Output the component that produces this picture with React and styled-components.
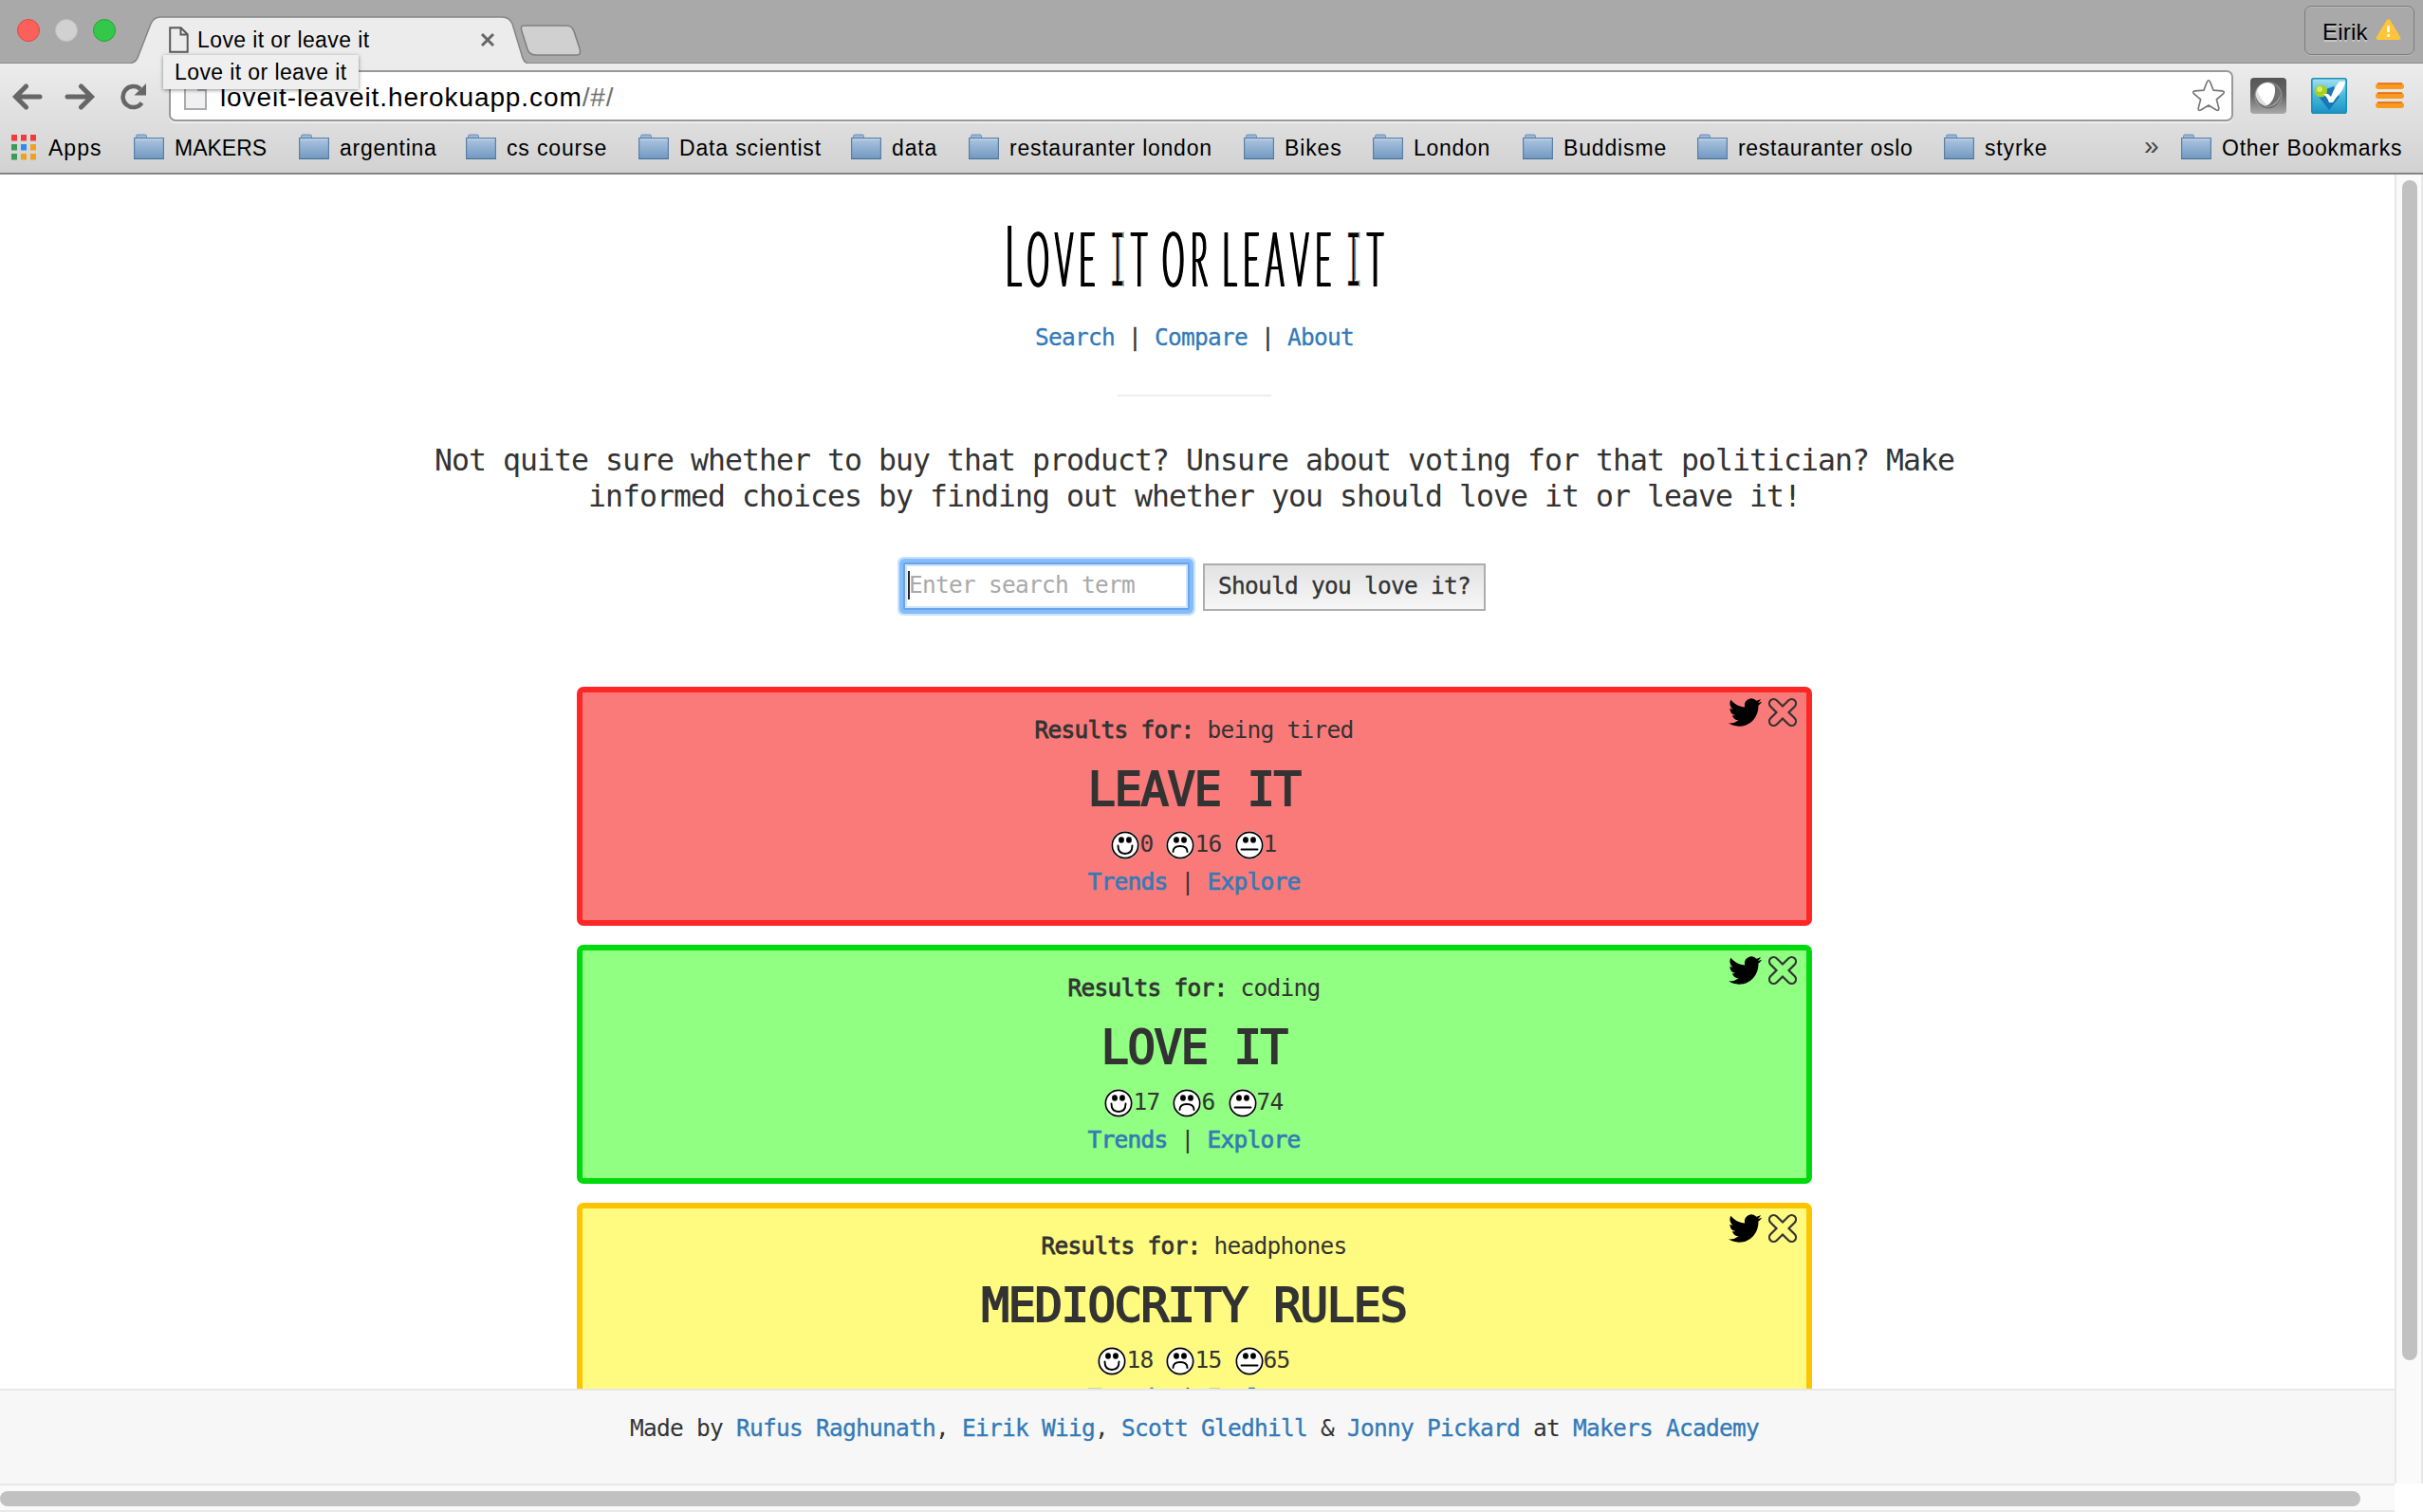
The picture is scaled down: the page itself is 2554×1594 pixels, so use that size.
import React from 'react';
import styled, { createGlobalStyle } from 'styled-components';

const Global = createGlobalStyle`
  * { box-sizing: border-box; }
  body { margin: 0; overflow: hidden; background: #fff; }
`;

const Window = styled.div`
  width: 2554px; height: 1594px; display: flex; flex-direction: column; overflow: hidden;
  font-family: "Liberation Sans", sans-serif; color: #000;
`;
const TitleBar = styled.div`
  height: 66px; flex: none; display: flex; align-items: flex-end; padding: 0 9px 0 18px; background: #a9a9a9;
`;
const Lights = styled.div`display: flex; gap: 16px; align-self: flex-start; margin-top: 20px; width: 120px;`;
const Light = styled.i`
  width: 24px; height: 24px; border-radius: 50%; background: ${p => p.$fill}; border: 1px solid ${p => p.$edge};
`;
const Tab = styled.div`
  position: relative; width: 418px; height: 49px; display: flex; align-items: center; padding: 0 34px 0 40px; z-index: 2;
`;
const TabShape = styled.svg`position: absolute; left: 0; top: 0;`;
const TabTitle = styled.span`
  position: relative; flex: 1; margin-left: 9px; padding-top: 2px; font-size: 23px; letter-spacing: .4px; white-space: nowrap;
`;
const OverSvg = styled.svg`position: relative; flex: none;`;
const Tooltip = styled.div`
  position: absolute; left: 34px; top: 41px; width: 206px; height: 36px; background: #efefef;
  box-shadow: 0 1px 4px rgba(0,0,0,.45); font-size: 23px; line-height: 37px; letter-spacing: .4px;
  padding-left: 12px; white-space: nowrap; z-index: 5;
`;
const NewTab = styled.svg`align-self: flex-start; margin: 26px 0 0 -9px;`;
const User = styled.div`
  align-self: flex-start; margin: 6px 0 0 auto; width: 116px; height: 52px; border: 1.5px solid #7b7b7b; border-radius: 7px;
  display: flex; align-items: center; gap: 8px; padding: 3px 0 0 18px; font-size: 24px; letter-spacing: .2px;
  text-shadow: 0 2px 0 rgba(255,255,255,.4); box-shadow: inset 0 1px 0 #b8b8b8, 0 1px 0 #b8b8b8;
  svg { margin-top: -5px; }
`;
const ToolArea = styled.div`
  height: 118px; flex: none; border-top: 1px solid #8d8d8d; border-bottom: 2px solid #848484;
  background: linear-gradient(#ececec, #d2d2d2); display: flex; flex-direction: column;
`;
const Toolbar = styled.div`height: 62px; display: flex; align-items: center; padding: 7px 18px 0 12px;`;
const NavIcons = styled.div`
  display: flex; gap: 23px; width: 166px; align-items: center; padding-top: 2px;
  svg:last-child { margin-left: 3px; }
`;
const Omnibox = styled.div`
  width: 2176px; height: 54px; border: 2px solid #999; border-radius: 7px; background: #fff;
  display: flex; align-items: center; padding: 0 6px 0 14px; box-shadow: 0 2px 0 rgba(255,255,255,.5);
`;
const Url = styled.span`
  flex: 1; margin-left: 14px; padding-top: 3px; font-size: 28px; letter-spacing: .9px; color: #000; white-space: nowrap;
  em { font-style: normal; color: #707070; }
`;
const Extensions = styled.div`
  display: flex; align-items: center; margin-left: 18px; gap: 26px;
  svg:last-child { margin-left: 4px; }
`;
const Bookmarks = styled.div`height: 54px; display: flex; align-items: center; padding-left: 12px;`;
const Bookmark = styled.div`
  width: ${p => p.$w}px; display: flex; align-items: center; gap: 11px; flex: none;
  font-size: 23px; letter-spacing: ${p => p.$ls ?? 0.85}px; white-space: nowrap;
  span { padding-top: 2px; }
`;
const More = styled.span`width: 39px; font-size: 28px; line-height: 28px; color: #444; margin-left: auto; padding-bottom: 3px;`;

const Body = styled.div`flex: 1; min-height: 0; display: grid; grid-template: 1380px 30px / 2524px 30px;`;
const Page = styled.div`
  min-height: 0; overflow: hidden; display: flex; flex-direction: column; color: #333;
  font-family: "DejaVu Sans Mono", monospace; font-size: 24.5px; letter-spacing: -.0306em; line-height: 40px;
`;
const Content = styled.main`
  width: 2518px; height: 1280px; flex: none; overflow: hidden; display: flex; flex-direction: column; align-items: center;
`;
const Title = styled.h1`
  margin: 37px 0 1px; height: 92px; width: 1106px; display: flex; align-items: baseline; justify-content: space-between;
  transform: scaleX(.36); font: 300 81px/92px Lato, sans-serif; color: #000; text-transform: uppercase; flex: none;
  letter-spacing: 0; text-shadow: -1.5px 0 #000, 1.5px 0 #000, -3px 0 #000, 3px 0 #000;
`;
const Word = styled.span`display: flex; align-items: baseline; justify-content: space-between; width: ${p => p.$w}px;`;
const Big = styled.span`font-size: 91px;`;
const Serifed = styled.span`
  font-family: "DejaVu Sans Mono", monospace; font-weight: 400; font-size: 79px; margin: 0 -3px; text-shadow: 2px 0 #000;
  -webkit-text-stroke: 1.5px #fff;
`;
const Link = styled.a`color: #337ab7; -webkit-text-stroke: ${p => (p.$strong ? '.7px' : '.3px')} #337ab7;`;
const Nav = styled.nav`margin-top: 22px; white-space: pre; height: 40px; flex: none; -webkit-text-stroke: .3px;`;
const Rule = styled.div`width: 162px; height: 2px; background: #eee; margin-top: 40px; flex: none;`;
const Lead = styled.p`
  margin: 48px 0 0; width: 1680px; font-size: 31.5px; letter-spacing: -.0306em; line-height: 38px; text-align: center;
  height: 77px; flex: none;
`;
const Search = styled.form`display: flex; gap: 14px; margin-top: 50px; height: 52px; flex: none; align-items: center;`;
const Field = styled.div`
  width: 302px; height: 50px; background: #fff; border: 2px solid #6ba5e7; padding: 0 0 2px 3px; color: #a9a9a9;
  box-shadow: 0 0 0 4px #85bdfc, 0 0 0 6px #c9e2fd, inset 0 0 0 2px #cfe5fd; border-radius: 2px;
  display: flex; align-items: center; white-space: pre; margin-top: -2px;
`;
const Caret = styled.i`width: 2px; height: 30px; background: #222; margin-right: -1px;`;
const Button = styled.button`
  width: 298px; height: 50px; padding: 0 0 2px; border: 2px solid #adadad; background: linear-gradient(#e2e2e2, #f7f7f7);
  font: inherit; letter-spacing: inherit; color: #333; white-space: nowrap; -webkit-text-stroke: .3px;
`;
const Cards = styled.section`margin-top: 79px; display: flex; flex-direction: column; gap: 20px;`;
const Card = styled.article`
  position: relative; width: 1302px; height: 252px; flex: none; border: 6px solid ${p => p.$edge}; background: ${p => p.$fill};
  border-radius: 7px; display: flex; flex-direction: column; align-items: center; padding: 20px 1px 0 0;
`;
const Actions = styled.div`position: absolute; right: 9px; top: 5px; display: flex; align-items: center; gap: 6px;`;
const Line = styled.div`height: 40px; flex: none; white-space: pre; b { font-weight: 400; -webkit-text-stroke: .8px; }`;
const Verdict = styled.h2`
  margin: 17px 0 11px; font-size: 49px; line-height: 52px; height: 52px; flex: none; font-weight: 400; letter-spacing: -.0306em;
  -webkit-text-stroke: 1.8px #333; white-space: pre;
`;
const Scores = styled.div`height: 40px; flex: none; display: flex; gap: 14px;`;
const Score = styled.span`display: flex; align-items: center; svg { margin-top: 2px; }`;
const Footer = styled.footer`
  height: 100px; flex: none; background: #f7f7f7; border-top: 2px solid #e7e7e7; text-align: center; padding: 20px 6px 0 0;
  white-space: pre;
`;
const VTrack = styled.div`background: #fafafa; border: solid #e8e8e8; border-width: 0 2px; padding: 6px 0 0 6px;`;
const VThumb = styled.div`width: 16px; height: 1244px; border-radius: 8px; background: #c1c1c1;`;
const HTrack = styled.div`background: #fafafa; border: solid #e8e8e8; border-width: 2px 0; padding: 6px 0 0 0;`;
const HThumb = styled.div`height: 16px; width: 2488px; border-radius: 8px; background: #c1c1c1;`;

const Folder = () => (
  <svg width="32" height="28" viewBox="0 0 32 28">
    <defs><linearGradient id="fold" x1="0" y1="0" x2="0" y2="1"><stop offset="0" stopColor="#adc5de" /><stop offset="1" stopColor="#7199c3" /></linearGradient></defs>
    <path d="M2.5 5V2.5q0-1.500 1.500-1.500h8q1.500 0 1.500 1.500V5" fill="#9bb7d5" stroke="#6d8fb3" />
    <rect x=".6" y="4.600" width="30.800" height="21.800" fill="url(#fold)" stroke="#5a7fa6" strokeWidth="1.200" />
    <path d="M1.500 6h29" stroke="#c6d9eb" /><path d="M0 26.500h32" stroke="#4f7093" />
  </svg>
);
const Doc = () => (
  <OverSvg width="21" height="28" viewBox="0 0 21 28"><path d="M1.200 1.200h11.500l7 7V26.800H1.200zM12.500 1.500v7h7" fill="none" stroke="#5a5a5a" strokeWidth="2" /></OverSvg>
);
const Arrow = ({ flip }) => (
  <svg width="33" height="28" viewBox="0 0 33 28"><path d={flip ? 'M3 14h25M17.500 3 28.500 14 17.500 25' : 'M30 14H5M15.500 3 4.500 14l11 11'} fill="none" stroke="#666" strokeWidth="5" strokeLinecap="round" /></svg>
);
const Reload = () => (
  <svg width="29" height="28" viewBox="0 0 29 28"><path d="M22.500 20.500A11 11 0 1 1 21 6" fill="none" stroke="#666" strokeWidth="4.500" /><path d="M27 0v12.500H14.500z" fill="#666" /></svg>
);
const Star = () => (
  <svg width="36" height="36" viewBox="0 0 36 36"><path d="M16.300 3.500q1.700-3.500 3.400 0l3.400 8.700 9.300.7q3.200.7 1 3l-7 6 2.400 9.200q.2 3-2.600 1.900L18 28l-8.200 5q-2.800 1.100-2.600-1.900l2.400-9.200-7-6q-2.200-2.300 1-3l9.300-.7z" fill="#fff" stroke="#777" strokeWidth="1.700" /></svg>
);
const GreyExtension = () => (
  <svg width="38" height="38" viewBox="0 0 38 38">
    <defs><linearGradient id="gext" x1="0" y1="0" x2="0" y2="1"><stop offset="0" stopColor="#565656" /><stop offset=".5" stopColor="#666" /><stop offset="1" stopColor="#aaa" /></linearGradient></defs>
    <rect width="38" height="38" rx="4" fill="url(#gext)" /><circle cx="19" cy="19" r="14.500" fill="#999" />
    <circle cx="19" cy="19" r="13.500" fill="#707070" />
    <path d="M5.500 18Q7 6 18 5q9 1 8 9-1 11-10 16Q7 27 5.500 18z" fill="#dedede" /><path d="M7 14Q10 6 18 5q9 1 8 9-1 11-8 15Q12 24 7 14z" fill="#fff" />
    <path d="M15 31q14-2 17-15-1 15-17 15z" fill="#a5a5a5" />
  </svg>
);
const CheckExtension = () => (
  <svg width="38" height="38" viewBox="0 0 38 38">
    <defs><linearGradient id="cext" x1="0" y1="0" x2="0" y2="1"><stop offset="0" stopColor="#a5e0f2" /><stop offset=".5" stopColor="#49b7dc" /><stop offset="1" stopColor="#1b93c6" /></linearGradient></defs>
    <rect x=".8" y=".8" width="36.400" height="36.400" rx="2" fill="url(#cext)" stroke="#1a8fb4" strokeWidth="1.600" />
    <path d="M8 20l11 14 11-14-6-11-8 3z" fill="#1976b8" />
    <circle cx="10.500" cy="14" r="6.500" fill="#a9cf1e" /><circle cx="9" cy="12" r="3" fill="#d7ec6b" />
    <path d="M13 17h5l3 3Q25 9 30 4h6q-1 7-6 13-4 4-7 9h-4q-2-6-6-9z" fill="#fff" />
  </svg>
);
const Menu = () => (
  <svg width="30" height="28" viewBox="0 0 30 28">{[0, 10, 20].map(y => <g key={y}><rect y={y + 1} width="30" height="6" rx="3" fill="#f99a1c" /><path d={`M2 ${y + 1}h26`} stroke="#e5620b" strokeWidth="1.500" /></g>)}</svg>
);
const Warning = () => (
  <svg width="27" height="23" viewBox="0 0 27 23"><path d="M11.500 1.500q2-2.500 4 0L26 19q1.500 3-2 3H3q-3.500 0-2-3z" fill="#ffc53a" /><path d="M13.500 7v7M13.500 16v3" stroke="#fff" strokeWidth="2.400" /></svg>
);
const Bird = () => (
  <svg width="35" height="30" viewBox="0 2 24 20" preserveAspectRatio="none"><path d="M23.954 4.569a10 10 0 0 1-2.825.775 4.958 4.958 0 0 0 2.163-2.723c-.951.555-2.005.959-3.127 1.184a4.920 4.920 0 0 0-8.384 4.482C7.691 8.094 4.066 6.130 1.640 3.161a4.822 4.822 0 0 0-.666 2.475c0 1.710.870 3.213 2.188 4.096a4.904 4.904 0 0 1-2.228-.616v.061a4.923 4.923 0 0 0 3.946 4.827 4.996 4.996 0 0 1-2.212.085 4.937 4.937 0 0 0 4.604 3.417 9.868 9.868 0 0 1-6.102 2.105c-.390 0-.779-.023-1.170-.067a13.995 13.995 0 0 0 7.557 2.209c9.054 0 13.999-7.496 13.999-13.986 0-.209 0-.420-.015-.630a9.936 9.936 0 0 0 2.460-2.548z" /></svg>
);
const Close = () => (
  <svg width="32" height="32" viewBox="0 0 32 32"><path d="M16 9.500 22.300 3.200a4.600 4.600 0 0 1 6.500 6.500L22.500 16l6.300 6.300a4.600 4.600 0 0 1-6.500 6.500L16 22.500l-6.300 6.300a4.600 4.600 0 0 1-6.500-6.500L9.500 16 3.200 9.700a4.600 4.600 0 0 1 6.500-6.500z" fill="none" stroke="#333" strokeWidth="2.200" /></svg>
);
const mouths = { happy: 'M7.500 15.500q0 8.500 7.500 8.500t7.500-8.500', sad: 'M7.500 22q0-6 7.500-6t7.500 6', flat: 'M6.500 19.500h17' };
const Face = ({ mood }) => (
  <svg width="30" height="30" viewBox="0 0 30 30"><circle cx="15" cy="15" r="14.700" fill="#fff" /><circle cx="15" cy="15" r="13.700" fill="#fff" stroke="#000" strokeWidth="1.700" /><ellipse cx="11" cy="9.500" rx="2.900" ry="3.200" /><ellipse cx="19" cy="9.500" rx="2.900" ry="3.200" /><path d={mouths[mood]} fill="none" stroke="#000" strokeWidth="1.900" strokeLinecap="round" /></svg>
);

const bookmarks = [
  ['MAKERS', 174, 0], ['argentina', 176, 0.75], ['cs course', 182], ['Data scientist', 224], ['data', 124],
  ['restauranter london', 290, 0.75], ['Bikes', 136], ['London', 158, 0.7], ['Buddisme', 184], ['restauranter oslo', 260, 0.7], ['styrke', 120],
];
const results = [
  { term: 'being tired', verdict: 'LEAVE IT', scores: [0, 16, 1], edge: '#ff2626', fill: '#fa7a7a' },
  { term: 'coding', verdict: 'LOVE IT', scores: [17, 6, 74], edge: '#00d90b', fill: '#90ff82' },
  { term: 'headphones', verdict: 'MEDIOCRITY RULES', scores: [18, 15, 65], edge: '#ffc400', fill: '#fffb80' },
];
const appColors = ['#f23a3a', '#f23a3a', '#f23a3a', '#3b9c5a', '#2a8bf2', '#f0a020', '#3b9c5a', '#f0a020', '#f0a020'];

export default function App() {
  return (
    <Window>
      <Global />
      <TitleBar>
        <Lights><Light $fill="#fc605b" $edge="#df4744" /><Light $fill="#d1d1d1" $edge="#bfbfbf" /><Light $fill="#34c84a" $edge="#24a436" /></Lights>
        <Tab>
          <TabShape width="418" height="51" viewBox="0 0 418 51">
            <path d="M0 49.500q6-1 8-8L21 8q3-7 10-7h360q8 0 11 7l10 33q2 8 6 8.500V51H0z" fill="#ececec" />
            <path d="M0 49.500q6-1 8-8L21 8q3-7 10-7h360q8 0 11 7l10 33q2 8 6 8.500" fill="none" stroke="#858585" strokeWidth="1.500" />
          </TabShape>
          <Doc />
          <TabTitle>Love it or leave it</TabTitle>
          <OverSvg width="16" height="16" viewBox="0 0 16 16"><path d="M2 2l12 12M14 2 2 14" stroke="#666" strokeWidth="3" /></OverSvg>
          <Tooltip>Love it or leave it</Tooltip>
        </Tab>
        <NewTab width="66" height="34" viewBox="0 0 66 34"><path d="M5 1h45q6 0 8 6l6 18q2 7-3 7H18q-7 0-9-6L3 7q-2-6 2-6z" fill="#d0d0d0" stroke="#808080" strokeWidth="1.600" /></NewTab>
        <User>Eirik<Warning /></User>
      </TitleBar>
      <ToolArea>
        <Toolbar>
          <NavIcons><Arrow /><Arrow flip /><Reload /></NavIcons>
          <Omnibox>
            <svg width="24" height="30" viewBox="0 0 24 30"><path d="M1 1h14l8 8v20H1z" fill="#f0f0f2" stroke="#aaa" strokeWidth="2" /><path d="M15 1v8h8" fill="#fff" stroke="#aaa" strokeWidth="2" /></svg>
            <Url>loveit-leaveit.herokuapp.com<em>/#/</em></Url>
            <Star />
          </Omnibox>
          <Extensions><GreyExtension /><CheckExtension /><Menu /></Extensions>
        </Toolbar>
        <Bookmarks>
          <Bookmark $w={129} $ls={1}>
            <svg width="28" height="27" viewBox="0 0 28 27">{appColors.map((c, i) => <rect key={i} x={(i % 3) * 10} y={Math.floor(i / 3) * 10} width="6" height="6.500" fill={c} />)}</svg>
            <span>Apps</span>
          </Bookmark>
          {bookmarks.map(([name, w, ls]) => <Bookmark key={name} $w={w} $ls={ls}><Folder /><span>{name}</span></Bookmark>)}
          <More>»</More>
          <Bookmark $w={255} $ls={0.75}><Folder /><span>Other Bookmarks</span></Bookmark>
        </Bookmarks>
      </ToolArea>
      <Body>
        <Page>
          <Content>
            <Title>
              <Word $w={262}><Big>L</Big><span>o</span><span>v</span><span>e</span></Word>
              <Word $w={108}><Serifed>i</Serifed><span>t</span></Word>
              <Word $w={132}><span>o</span><span>r</span></Word>
              <Word $w={318}><span>l</span><span>e</span><span>a</span><span>v</span><span>e</span></Word>
              <Word $w={108}><Serifed>i</Serifed><span>t</span></Word>
            </Title>
            <Nav><Link>Search</Link> | <Link>Compare</Link> | <Link>About</Link></Nav>
            <Rule />
            <Lead>Not quite sure whether to buy that product? Unsure about voting for that politician? Make<br />informed choices by finding out whether you should love it or leave it!</Lead>
            <Search>
              <Field><Caret />Enter search term</Field>
              <Button type="button">Should you love it?</Button>
            </Search>
            <Cards>
              {results.map(r => (
                <Card key={r.term} $edge={r.edge} $fill={r.fill}>
                  <Actions><Bird /><Close /></Actions>
                  <Line><b>Results for:</b> {r.term}</Line>
                  <Verdict>{r.verdict}</Verdict>
                  <Scores>
                    {['happy', 'sad', 'flat'].map((m, i) => <Score key={m}><Face mood={m} />{r.scores[i]}</Score>)}
                  </Scores>
                  <Line><Link $strong>Trends</Link> | <Link $strong>Explore</Link></Line>
                </Card>
              ))}
            </Cards>
          </Content>
          <Footer>Made by <Link>Rufus Raghunath</Link>, <Link>Eirik Wiig</Link>, <Link>Scott Gledhill</Link> & <Link>Jonny Pickard</Link> at <Link>Makers Academy</Link></Footer>
        </Page>
        <VTrack><VThumb /></VTrack>
        <HTrack><HThumb /></HTrack>
      </Body>
    </Window>
  );
}
